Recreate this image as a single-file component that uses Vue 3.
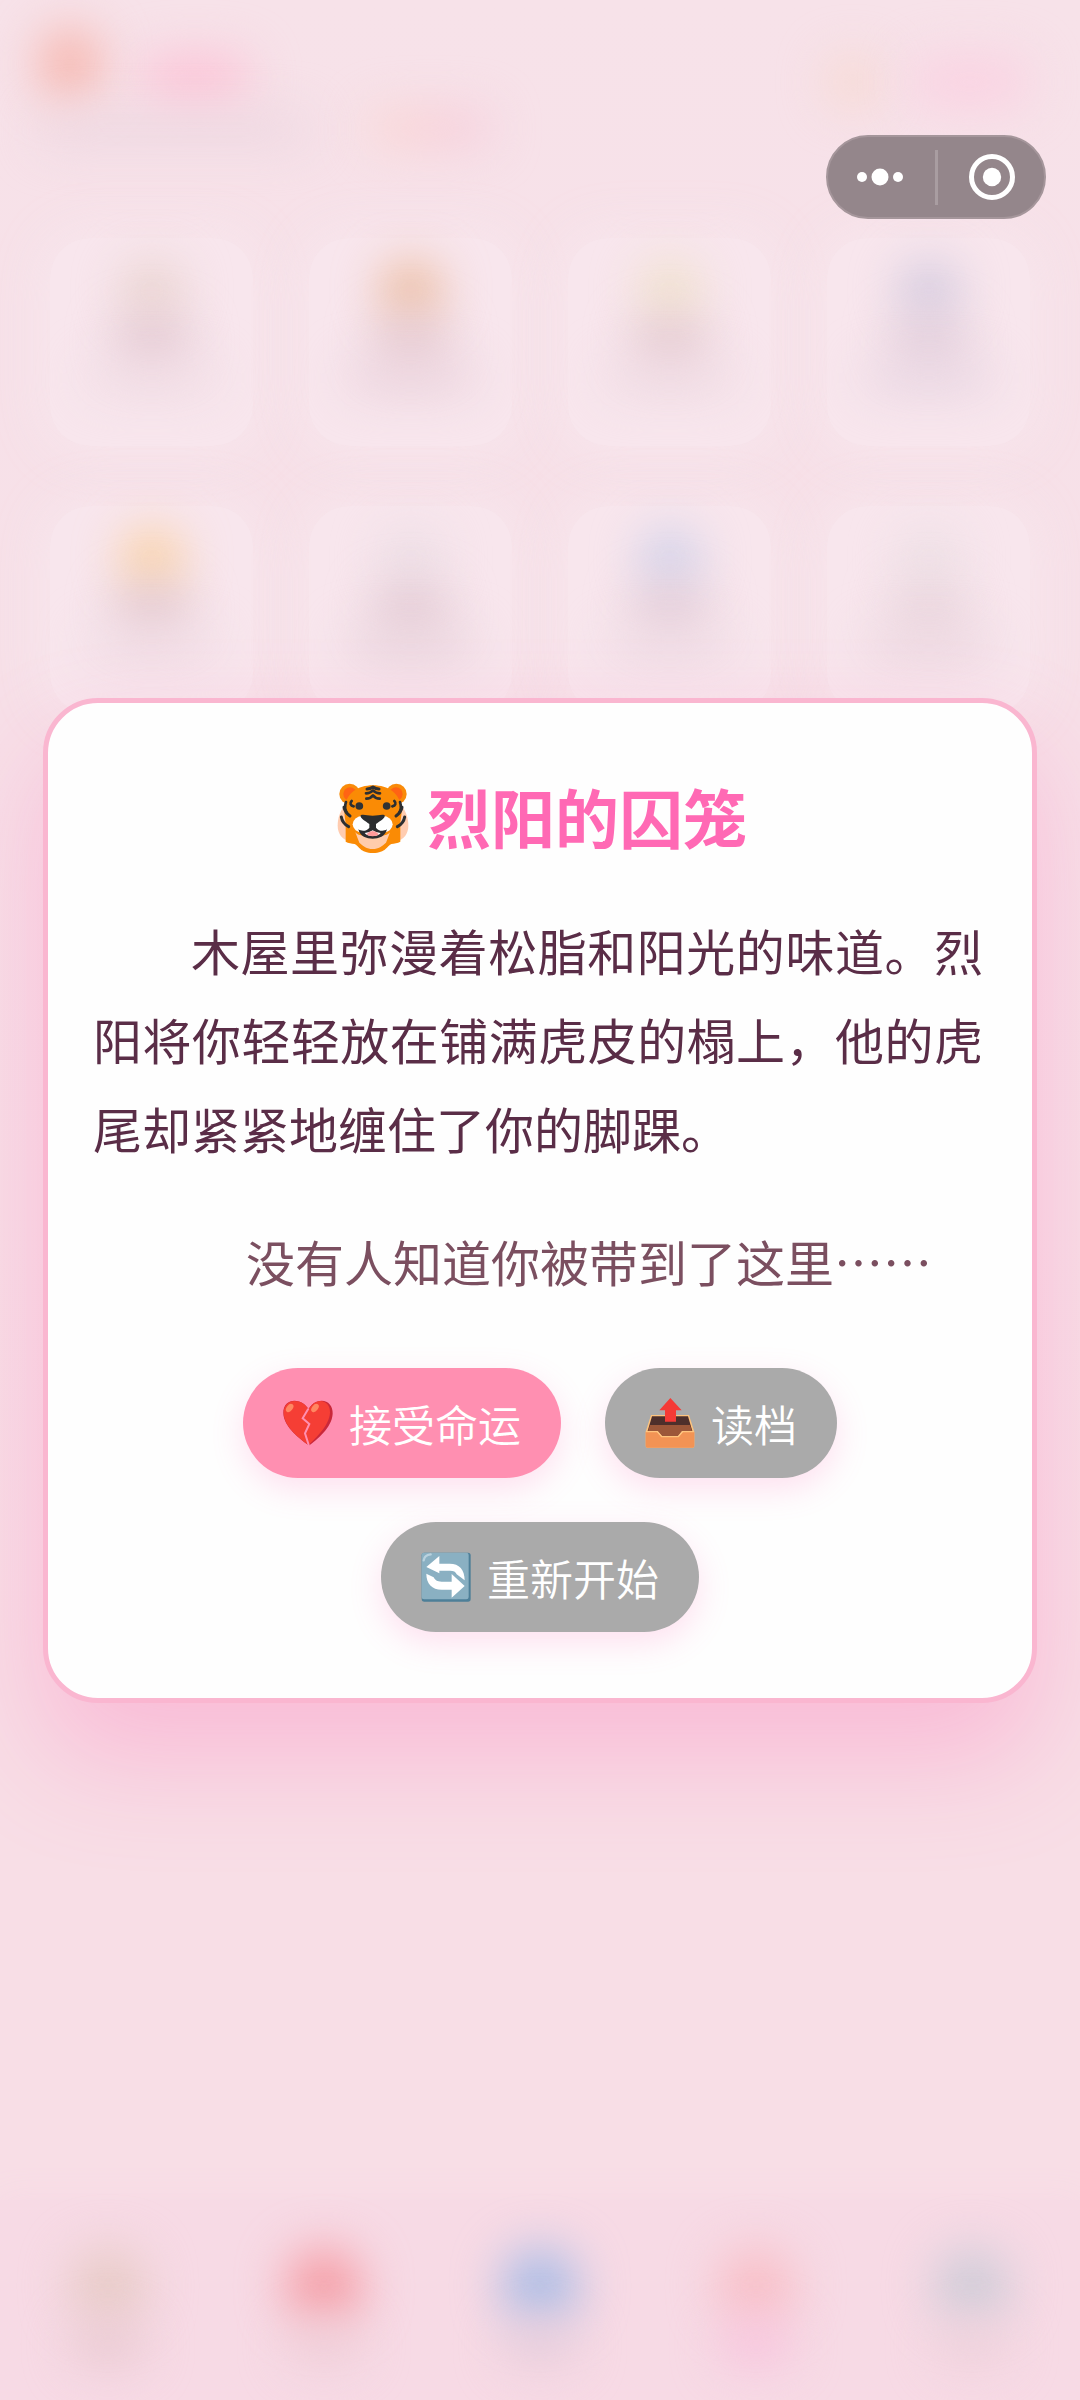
<script setup>
const tiles = [
  { icon: '#e8d2cc', label: '#e0c4ce', shade: '#f0dce4' },
  { icon: '#eab897', label: '#e2c5cd', shade: '#ead2dc' },
  { icon: '#efe2c8', label: '#e1c5cc', shade: '#eedae2' },
  { icon: '#cfc8de', label: '#dfcad8', shade: '#e7d5e2' },
  { icon: '#fad09c', label: '#dfc3cb', shade: '#f0dce4' },
  { icon: '#eadde4', label: '#e0c6d0', shade: '#e8d3dc' },
  { icon: '#ccd0ea', label: '#e0c8d4', shade: '#eedbe4' },
  { icon: '#ebdfe4', label: '#e7d2da', shade: '#ebd6df' },
]

const tabs = [
  { icon: '#e7cbc6', label: '#e8c8d0' },
  { icon: '#f59ca4', label: '#eeced8' },
  { icon: '#a8bce6', label: '#e6ccda' },
  { icon: '#f8bec6', label: '#f8c2de' },
  { icon: '#ceccd8', label: '#eed0da' },
]
</script>

<template>
  <div class="page">
    <div class="scene" aria-hidden="true">
      <div class="scene-head">
        <div class="head-title">
          <div class="head-row">
            <i class="glow sun"></i>
            <i class="glow name"></i>
          </div>
          <div class="head-row sub">
            <i class="glow line"></i>
            <i class="glow tag"></i>
          </div>
        </div>
        <div class="head-side">
          <i class="glow coin"></i>
          <i class="glow count"></i>
        </div>
      </div>
      <div class="tiles">
        <div v-for="(tile, i) in tiles" :key="i" class="tile">
          <i class="glow tile-icon" :style="{ background: tile.icon }"></i>
          <i class="glow tile-label" :style="{ background: tile.label }"></i>
          <i class="glow tile-shade" :style="{ background: tile.shade }"></i>
        </div>
      </div>
      <div class="tabs">
        <div v-for="(tab, i) in tabs" :key="i" class="tab">
          <i class="glow tab-icon" :style="{ background: tab.icon }"></i>
          <i class="glow tab-label" :style="{ background: tab.label }"></i>
        </div>
      </div>
    </div>

    <div class="capsule">
      <button class="capsule-btn" type="button" aria-label="更多">
        <svg width="48" height="20" viewBox="0 0 48 20" fill="#fff">
          <circle cx="5" cy="10" r="5" />
          <circle cx="23" cy="10" r="8.5" />
          <circle cx="41" cy="10" r="5" />
        </svg>
      </button>
      <span class="capsule-line"></span>
      <button class="capsule-btn" type="button" aria-label="关闭">
        <svg width="48" height="48" viewBox="0 0 48 48">
          <circle cx="25" cy="24" r="20.5" fill="none" stroke="#fff" stroke-width="5" />
          <circle cx="25" cy="24" r="9.2" fill="#fff" />
        </svg>
      </button>
    </div>

    <main class="dialog" role="dialog" aria-labelledby="dialog-title">
      <h1 id="dialog-title" class="title">
        <svg class="tiger" viewBox="-12 -22 240 240" aria-hidden="true">
          <path d="M22 72C8 88 2 110 2 130c0 24 14 42 34 46h144c20-4 34-22 34-46 0-20-6-42-20-58z" fill="#ffccb0" />
          <circle cx="38" cy="35" r="31" fill="#f98b0a" />
          <circle cx="178" cy="35" r="31" fill="#f98b0a" />
          <circle cx="39" cy="35" r="20" fill="#ff6414" />
          <circle cx="177" cy="35" r="20" fill="#ff6414" />
          <path d="M108 9c-46 0-80 25-85 65-3 24 4 40 3 62v42c8 5 18 5 27 7 12 5 16 27 55 27s43-22 55-27c9-2 19-2 27-7v-42c-1-22 6-38 3-62-5-40-39-65-85-65z" fill="#fa8b05" />
          <path d="M55 150c10 12 32 13 52 2 20 11 42 10 52-2l-12 31c-12 11-22 19-40 19s-28-8-40-19z" fill="#ffccab" />
          <ellipse cx="77" cy="126" rx="30" ry="25" fill="#fff" />
          <ellipse cx="137" cy="126" rx="30" ry="25" fill="#fff" />
          <path d="M71 99c8-4 19 1 36 1s28-5 36-1c3 9-15 18-26 26v11c6 9 21 13 33 5-5 22-25 28-43 28s-38-6-43-28c12 8 27 4 33-5v-11c-11-8-29-17-26-26z" fill="#2b2d2f" />
          <path d="M83 152q14 0 24-8 10 8 24 8-6 9-24 9t-24-9z" fill="#fff" />
          <path d="M88 156q19-20 38 0-6 6-19 6t-19-6z" fill="#ff9a9a" />
          <circle cx="67" cy="71" r="11.5" fill="#303234" />
          <circle cx="149" cy="71" r="11.5" fill="#303234" />
          <g fill="none" stroke="#2d2f31" stroke-linecap="round" stroke-linejoin="round">
            <path d="M90 20q10 0 18-6 8 6 18 6" stroke-width="9" />
            <path d="M87 33q12 0 21-9 9 9 21 9M88 49q13 0 20-10 7 10 20 10" stroke-width="8" />
            <path d="M44 56q-5 5-3 10 2 5 9 6M172 56q5 5 3 10-2 5-9 6" stroke-width="8" />
            <path d="M27 59q-6 18 2 31M189 59q6 18-2 31" stroke-width="8" />
            <path d="M21 75q3 15 18 26M195 75q-3 15-18 26M13 104q3 19 22 29M203 104q-3 19-22 29" stroke-width="9" />
          </g>
        </svg>
        <span>烈阳的囚笼</span>
      </h1>

      <p class="story">木屋里弥漫着松脂和阳光的味道。烈阳将你轻轻放在铺满虎皮的榻上，他的虎尾却紧紧地缠住了你的脚踝。</p>
      <p class="aside">没有人知道你被带到了这里⋯⋯</p>

      <div class="actions">
        <button class="action primary" type="button">
          <svg class="icon" viewBox="0 0 150 150" aria-hidden="true">
            <path d="M78 143C52 123 2 88 1 45 0 20 17 8 34 8c20 0 34 11 43 26C84 19 98 8 116 8c20 0 34 16 33 39-2 42-48 78-71 96z" fill="#c9283a" />
            <path d="M77 141C48 121 3 85 2 45 1 22 18 9 34 9c20 0 33 10 43 26 6-15 20-26 35-26 18 0 30 15 29 35-2 39-44 77-64 97z" fill="#f53e35" />
            <ellipse cx="20" cy="30" rx="9" ry="14" transform="rotate(38 20 30)" fill="#ff8762" />
            <ellipse cx="96" cy="30" rx="9" ry="14" transform="rotate(38 96 30)" fill="#ff8762" />
            <path d="M76 32L59 61l20 17-13 28 12 38" fill="none" stroke="#ff8fb1" stroke-width="6" />
          </svg>
          <span>接受命运</span>
        </button>
        <button class="action" type="button">
          <svg class="icon" viewBox="0 0 150 150" aria-hidden="true">
            <path d="M18 51h114l16 50v43q0 5-5 5H7q-5 0-5-5v-43z" fill="#ffc47e" />
            <path d="M21 55h108l13 44H8z" fill="#4e2f2b" />
            <path d="M15 81h120l6 18h-30l-12 15H51L38 99H9z" fill="#9c5739" />
            <path d="M2 101h34l13 15h52l13-15h34v43q0 5-5 5H7q-5 0-5-5z" fill="#f29355" />
            <path d="M3 101h34l13 15h50l13-15h34" fill="none" stroke="#ffc47e" stroke-width="4" />
            <path d="M76 0l34 37H93v34H60V37H43z" fill="#f53a36" />
          </svg>
          <span>读档</span>
        </button>
        <button class="action" type="button">
          <svg class="icon" viewBox="0 0 150 150" aria-hidden="true">
            <rect x="2" y="2" width="147" height="147" rx="8" fill="#4d7f98" />
            <rect x="2" y="2" width="141" height="140" rx="7" fill="#8ab0c2" />
            <path d="M8 25Q10 9 29 7" fill="none" stroke="#bad2de" stroke-width="7" stroke-linecap="round" />
            <path d="M16 45L55 12v23h31c29 0 45 18 45 50L107 67c-3-8-9-11-20-11H55v8z" fill="#fff" />
            <path d="M131 102L92 66v23H62c-14 0-20-5-24-13L16 65c0 30 17 48 46 48h30v24z" fill="#fff" />
          </svg>
          <span>重新开始</span>
        </button>
      </div>
    </main>
  </div>
</template>

<style>
body {
  margin: 0;
  background: #f8dee5;
}
</style>

<style scoped>
.page {
  position: relative;
  display: flex;
  align-items: center;
  min-height: 100vh;
  padding: 0 43px;
  box-sizing: border-box;
  overflow: hidden;
  background: linear-gradient(180deg, #f7e2e9 0%, #f7e0e8 30%, #f8dee6 70%, #f8dee6 100%);
  font-family: "Noto Sans CJK SC", "Noto Sans", sans-serif;
}

.scene {
  position: absolute;
  inset: 0;
  display: flex;
  flex-direction: column;
}

.glow {
  display: block;
  border-radius: 40px;
  filter: blur(24px);
}

.scene-head {
  display: flex;
  justify-content: space-between;
  height: 150px;
  padding: 28px 50px 0 40px;
}

.head-row {
  display: flex;
  align-items: flex-end;
  gap: 40px;
}

.sun {
  width: 60px;
  height: 72px;
  background: #f6b5ac;
}

.name {
  width: 110px;
  height: 44px;
  background: #fcc2d6;
}

.sub {
  gap: 60px;
  padding-top: 12px;
}

.line {
  width: 270px;
  height: 28px;
  background: #ecd6e0;
}

.tag {
  width: 120px;
  height: 32px;
  background: linear-gradient(90deg, #fcd6ce, #f5c9dc);
}

.head-side {
  display: flex;
  align-items: center;
  gap: 32px;
  height: 108px;
}

.coin {
  width: 50px;
  height: 50px;
  background: #f7d8ce;
}

.count {
  width: 120px;
  height: 50px;
  background: #fad2e2;
}

.tiles {
  display: grid;
  grid-template-columns: repeat(4, 1fr);
  gap: 60px 56px;
  padding: 60px 50px;
}

.tile {
  display: flex;
  flex-direction: column;
  align-items: center;
  height: 208px;
  padding-top: 24px;
  box-sizing: border-box;
  border-radius: 40px;
  background: rgba(248, 231, 237, 0.8);
  box-shadow: 0 0 48px 8px rgba(248, 231, 237, 0.8);
}

.tile-icon {
  width: 58px;
  height: 58px;
}

.tile-label {
  width: 72px;
  height: 44px;
}

.tile-shade {
  width: 130px;
  height: 28px;
}

.tabs {
  display: flex;
  margin-top: auto;
  height: 200px;
  background: #f7dae5;
  box-shadow: 0 0 32px #f7dae5;
}

.tab {
  flex: 1;
  display: flex;
  flex-direction: column;
  align-items: center;
  padding-top: 48px;
}

.tab-icon {
  width: 76px;
  height: 76px;
}

.tab-label {
  width: 70px;
  height: 40px;
}

.capsule {
  position: absolute;
  top: 135px;
  right: 34px;
  display: flex;
  align-items: center;
  width: 220px;
  height: 84px;
  box-sizing: border-box;
  border: 2px solid #a5969b;
  border-radius: 43px;
  background: #94868b;
}

.capsule-btn {
  flex: 1;
  display: flex;
  align-items: center;
  justify-content: center;
  height: 100%;
  padding: 0;
  border: 0;
  background: none;
}

.capsule-line {
  width: 3px;
  height: 55px;
  background: #a99da1;
}

.dialog {
  position: relative;
  width: 100%;
  box-sizing: border-box;
  padding: 66px 45px;
  border: 5px solid #fab6d0;
  border-radius: 55px;
  background: #fefefe;
  box-shadow: 0 55px 110px rgba(255, 105, 180, 0.3);
}

.title {
  display: flex;
  align-items: center;
  justify-content: center;
  gap: 14px;
  margin: 0 0 43px;
  font-size: 64px;
  line-height: 93px;
  font-weight: 700;
  color: #ff69b4;
}

.tiger {
  width: 80px;
  height: 80px;
}

.story,
.aside {
  margin: 0;
  font-size: 49px;
  line-height: 89px;
  text-indent: 2em;
  color: #5a2d47;
}

.story {
  padding-right: 4px;
  text-align: justify;
}

.aside {
  margin-top: 44px;
  text-align: center;
  color: #7b4f60;
}

.actions {
  display: flex;
  flex-wrap: wrap;
  justify-content: center;
  gap: 44px;
  margin-top: 63px;
}

.action {
  display: flex;
  align-items: center;
  gap: 16px;
  height: 110px;
  padding: 0 40px;
  border: 0;
  border-radius: 55px;
  background: #aaa;
  box-shadow: 0 11px 33px rgba(255, 105, 180, 0.2);
  font-family: inherit;
  font-size: 43px;
  font-weight: 350;
  color: #fff;
}

.primary {
  background: #ff8fb1;
}

.icon {
  width: 50px;
  height: 50px;
}
</style>
